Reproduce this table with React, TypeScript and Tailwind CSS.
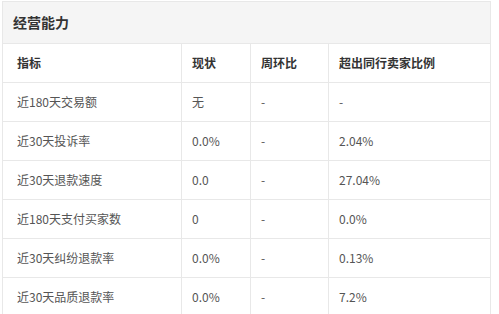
const rows: [string, string, string, string][] = [
  ["近180天交易额", "无", "-", "-"],
  ["近30天投诉率", "0.0%", "-", "2.04%"],
  ["近30天退款速度", "0.0", "-", "27.04%"],
  ["近180天支付买家数", "0", "-", "0.0%"],
  ["近30天纠纷退款率", "0.0%", "-", "0.13%"],
  ["近30天品质退款率", "0.0%", "-", "7.2%"],
];

const App = () => {
  return (
    <div className="bg-white w-[499px] h-[314px] overflow-hidden pt-px pl-[2px] font-['Noto_Sans_CJK_SC',sans-serif]">
      <div className="w-[489px] border border-[#e8e8e8]">
        <div className="h-[42px] bg-[#f5f5f5] border-b border-[#e8e8e8] flex items-center pl-[10px] text-[14px] font-bold text-[#333]">
          经营能力
        </div>
        <div className="grid grid-cols-[179px_69px_78px_1fr] text-[12px]">
          {[["指标", "现状", "周环比", "超出同行卖家比例"], ...rows].map((r, i) => (
            <div key={i} className="contents">
              {r.map((c, j) => (
                <div
                  key={j}
                  className={
                    "h-[39px] flex items-center border-b border-[#e8e8e8] " +
                    (j === 0 ? "pl-[14px] " : "pl-[10px] ") +
                    (j < 3 ? "border-r " : "") +
                    (i === 0 ? "font-bold text-[#333]" : "text-[#555]")
                  }
                >
                  {c}
                </div>
              ))}
            </div>
          ))}
        </div>
      </div>
    </div>
  );
};

export default App;
